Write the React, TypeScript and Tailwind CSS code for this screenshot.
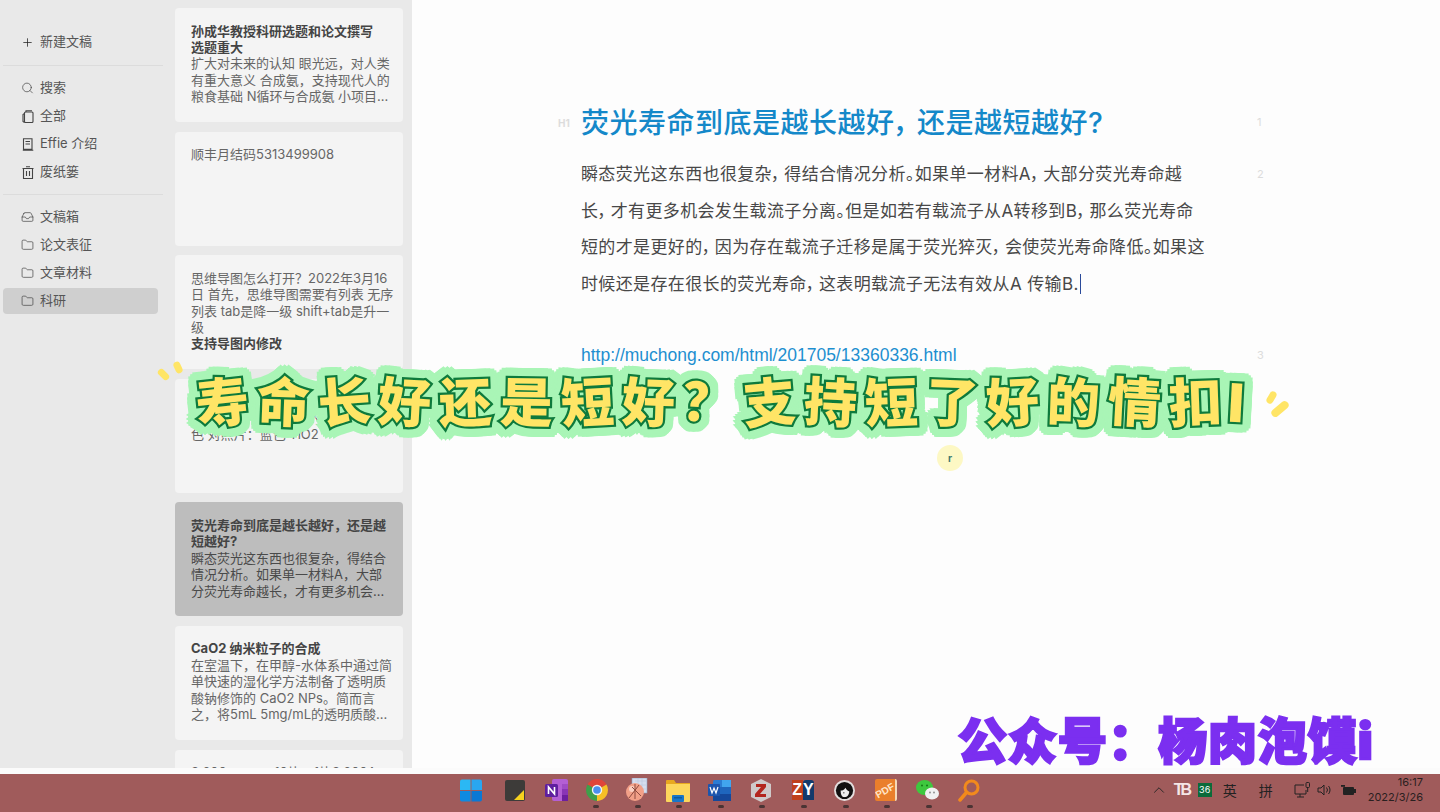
import React from "react";
import { Plus, Search, Inbox, Folder, ChevronUp } from "lucide-react";

const CJK = "font-['Inter','Noto_Sans_CJK_SC',sans-serif]";

type CardT = { lines: { t: string; b?: boolean }[]; active?: boolean };

const cards: CardT[] = [
  { lines: [
    { t: "孙成华教授科研选题和论文撰写", b: true }, { t: "选题重大", b: true },
    { t: "扩大对未来的认知 眼光远，对人类" }, { t: "有重大意义 合成氨，支持现代人的" }, { t: "粮食基础 N循环与合成氨 小项目..." } ] },
  { lines: [{ t: "顺丰月结码5313499908" }] },
  { lines: [
    { t: "思维导图怎么打开？2022年3月16" }, { t: "日 首先，思维导图需要有列表 无序" }, { t: "列表 tab是降一级 shift+tab是升一" }, { t: "级" }, { t: "支持导图内修改", b: true } ] },
  { lines: [{ t: "如何判断材料的光" }, { t: "照射后，产生活性氧的能力" }, { t: "色 对照片：蓝色 TiO2" }] },
  { active: true, lines: [
    { t: "荧光寿命到底是越长越好，还是越", b: true }, { t: "短越好?", b: true },
    { t: "瞬态荧光这东西也很复杂，得结合" }, { t: "情况分析。如果单一材料A，大部" }, { t: "分荧光寿命越长，才有更多机会..." } ] },
  { lines: [
    { t: "CaO2 纳米粒子的合成", b: true }, { t: "在室温下，在甲醇-水体系中通过简" }, { t: "单快速的湿化学方法制备了透明质" }, { t: "酸钠修饰的 CaO2 NPs。简而言" }, { t: "之，将5mL 5mg/mL的透明质酸..." }, { t: "MOFS", b: true } ] },
  { lines: [{ t: "3.600             10片，1片3.600A" }] },
];

function NavItem({ icon, label, active }: { icon: React.ReactNode; label: string; active?: boolean }) {
  return (
    <div className={`mx-[3px] w-[155px] h-[26px] my-px shrink-0 flex items-center rounded-[4px] pl-[18px] gap-[6px] text-[13px] text-[#555] ${active ? "bg-[#cfcfcf]" : ""}`}>
      <span className="w-[13px] h-[14px] flex items-center justify-center">{icon}</span>
      <span>{label}</span>
    </div>
  );
}

function Card({ c }: { c: CardT }) {
  return (
    <div className={`h-[114px] shrink-0 w-[228px] rounded-[4px] pl-4 pt-[14.5px] overflow-hidden text-[13px] leading-[16.4px] whitespace-pre ${c.active ? "bg-[#bdbdbd] text-[#4a4a4a]" : "bg-[#f4f4f4] text-[#666]"}`}>
      <div className="h-[86px] w-[212px] overflow-hidden">
        {c.lines.map((l, i) => (
          <div key={i} className={l.b ? "font-bold text-[#444]" : ""}>{l.t}</div>
        ))}
      </div>
    </div>
  );
}

function Row({ mark, n, children, cls, numPt }: { mark?: string; n: number; children: React.ReactNode; cls: string; numPt: string }) {
  return (
    <div className={`flex ${cls}`}>
      <div className="w-[23px] text-[10px] font-bold text-[#dcdcdc] pt-[13px] leading-[14px] shrink-0">{mark}</div>
      <div className="w-[676px] shrink-0">{children}</div>
      <div className={`text-[11px] text-[#dcdcdc] leading-[14px] ${numPt}`}>{n}</div>
    </div>
  );
}

const Body = ({ children }: { children: React.ReactNode }) => (
  <div className="h-[36.5px] leading-[36.5px] text-[17px] text-[#484848] whitespace-nowrap tracking-[0.36px] [font-feature-settings:'palt']">{children}</div>
);

function Icon({ children }: { children: React.ReactNode }) {
  return <div className="w-[41.5px] h-[24px] flex items-center justify-center shrink-0">{children}</div>;
}

const s = { fill: "none", stroke: "#444", strokeWidth: 1.1 };

const AllIcon = () => (
  <svg width="12" height="13" viewBox="0 0 12 13"><rect x="2.500" y="2" width="8.500" height="10.500" rx="1" {...s} /><path d="M2.500 3.500 1 4.500v7l1.500 1M4 2V.700h6" {...s} /></svg>
);
const DocIcon = () => (
  <svg width="12" height="13" viewBox="0 0 12 13"><path d="M1.500.700h8.500v10.500H1.500zM3.500 3.500h4.500M3.500 6h4.500M.800 12.300h10.500" {...s} /></svg>
);
const TrashIcon = () => (
  <svg width="12" height="13" viewBox="0 0 12 13"><path d="M1.500 2.500h9v10h-9zM.500 2.500h11M4 .700h4M4.500 5v5M7.500 5v5" {...s} /></svg>
);

function Taskbar() {
  return (
    <div className="h-[38px] bg-[#a05b5b] flex items-center relative shrink-0">
      <div className="flex ml-[450px] -mt-[6px]">
        <Icon><svg width="22" height="23" viewBox="0 0 23 23"><path fill="#2bb8f4" d="M0 2a2 2 0 0 1 2-2h9v11H0z"/><path fill="#29a6f0" d="M12 0h9a2 2 0 0 1 2 2v9H12z"/><path fill="#0f8ae0" d="M0 12h11v11H2a2 2 0 0 1-2-2z"/><path fill="#0a78d4" d="M12 12h11v9a2 2 0 0 1-2 2h-9z"/></svg></Icon>
        <Icon><svg width="20" height="21" viewBox="0 0 20 21" className="ml-[5px]"><rect width="20" height="21" rx="2" fill="#3d3b39"/><path fill="#f7d21e" d="M19 10v10H9z"/></svg></Icon>
        <Icon><svg width="23" height="22" viewBox="0 0 23 22" className="ml-[5px]"><rect x="7" y="0" width="16" height="22" rx="2" fill="#b45fd4"/><rect x="17" y="5" width="6" height="5" fill="#a04cc4"/><rect x="17" y="10" width="6" height="6" fill="#8a35b5"/><rect x="17" y="16" width="6" height="6" fill="#6d1f9e"/><rect x="0" y="5" width="13" height="13" rx="1.500" fill="#5f1f9f"/><path d="M3.500 15V8l6 7V8" stroke="#fff" strokeWidth="1.600" fill="none"/></svg></Icon>
        <Icon><svg width="22" height="22" viewBox="0 0 22 22" className="ml-[3px]"><path fill="#e0453a" d="M11 11 1.500 5.500A11 11 0 0 1 20.500 5.500z"/><path fill="#3f9f4a" d="M11 11 1.500 5.500A11 11 0 0 0 11 22z"/><path fill="#f6c026" d="M11 11v11A11 11 0 0 0 20.500 5.500z"/><circle cx="11" cy="11" r="5.200" fill="#f4f4f4"/><circle cx="11" cy="11" r="3.800" fill="#4a8ff0"/></svg></Icon>
        <Icon><svg width="22" height="24" viewBox="0 0 22 24"><rect x="6" y="0" width="15" height="15" fill="#d5ddee" stroke="#8fa0c0" strokeWidth=".6"/><path d="M9 3h11M9 7h11M9 11h11M12 0v15M16 0v15" stroke="#b5c2da" strokeWidth=".5"/><circle cx="9" cy="14" r="9" fill="#f2a088"/><circle cx="6" cy="11" r="3" fill="#fbd0c2"/><path d="M3 20 13 7M6 9l9 9M9 6v15" stroke="#8e4a3e" strokeWidth="1"/></svg></Icon>
        <Icon><svg width="24" height="23" viewBox="0 0 24 23"><path fill="#e8a820" d="M0 2a1 1 0 0 1 1-1h7l2 3h14v5H0z"/><path fill="#fdd65c" d="M0 5h24v17a1 1 0 0 1-1 1H1a1 1 0 0 1-1-1z"/><rect x="6" y="16" width="12" height="7" rx="1" fill="#1976c8"/><rect x="8" y="18" width="8" height="1.500" fill="#0f5aa0"/></svg></Icon>
        <Icon><svg width="23" height="21" viewBox="0 0 23 21"><rect x="5" y="0" width="18" height="21" rx="1.500" fill="#2b7cd3"/><rect x="14" y="0" width="9" height="7" fill="#41a5ee"/><rect x="5" y="14" width="18" height="7" fill="#15489a"/><rect x="5" y="7" width="18" height="7" fill="#1f66bd"/><rect x="0" y="4" width="12" height="12" rx="1" fill="#1d55ad"/><path d="m2 7 2 6 2-5 2 5 2-6" stroke="#fff" strokeWidth="1.200" fill="none"/></svg></Icon>
        <Icon><svg width="20" height="23" viewBox="0 0 20 23"><path fill="#cfc9c9" d="M10 0 20 5v13l-10 5L0 18V5z"/><path fill="#b3261e" d="M5 5h10v3l-6 7h6v3H4v-3l6-7H5z"/></svg></Icon>
        <Icon><div className="w-[22px] h-[20px] flex text-[16px] leading-[20px] font-bold font-['Liberation_Sans',sans-serif] text-white"><span className="bg-[#c0401d] w-[11px] text-center">Z</span><span className="bg-[#123a6b] w-[11px] text-center rounded-t-[3px]">Y</span></div></Icon>
        <Icon><svg width="21" height="21" viewBox="0 0 22 22"><circle cx="11" cy="11" r="11" fill="#e4dede"/><circle cx="11" cy="11" r="9" fill="#111"/><path fill="#eee" d="M7 11c2 0 4-1 5-3 1 2 2 3 4 4 0 3-2 6-5 6s-4-3-4-7z"/><path fill="#111" d="M9.500 13h1.500v1H9.500zM8.500 18h5v2h-5z"/></svg></Icon>
        <Icon><div className="w-[22px] h-[22px] rounded-[2px] bg-[#ea7f2b] border-r-2 border-[#f4d8b8] overflow-hidden flex items-center justify-center"><span className="text-[10px] font-bold text-[#ffe4c8] font-['Liberation_Sans',sans-serif] -rotate-[30deg]">PDF</span></div></Icon>
        <Icon><svg width="23" height="21" viewBox="0 0 23 21"><ellipse cx="8.500" cy="7.500" rx="8.500" ry="7.500" fill="#3ec83e"/><ellipse cx="16" cy="13.500" rx="7" ry="6" fill="#f0f0f0"/><circle cx="6" cy="5.500" r="1" fill="#157a15"/><circle cx="11" cy="5.500" r="1" fill="#157a15"/><circle cx="14" cy="12.500" r=".9" fill="#888"/><circle cx="18" cy="12.500" r=".9" fill="#888"/></svg></Icon>
        <Icon><svg width="22" height="23" viewBox="0 0 22 23"><circle cx="13.500" cy="8.500" r="6.500" fill="none" stroke="#f28a1c" strokeWidth="3"/><path d="M8.500 13.500 2 21" stroke="#f28a1c" strokeWidth="3.500" strokeLinecap="round"/></svg></Icon>
      </div>
      <div className="absolute left-[593px] bottom-[4px] flex gap-[35.600px]">
        {Array.from({ length: 10 }).map((_, i) => (
          <span key={i} className="w-[6px] h-[3px] rounded-full bg-[#4a3434]" />
        ))}
      </div>
      <div className="absolute right-[17px] top-0 h-[32px] flex items-center text-[#222]">
        <ChevronUp size={18} strokeWidth={1.200} className="mr-[6px]" />
        <span className="w-[17px] text-[16px] font-bold tracking-[-3px] text-[#f4e6e6] font-['Liberation_Sans',sans-serif] mr-[7px]">TB</span>
        <span className="w-[14px] h-[14px] bg-[#0b6b3a] text-white text-[9px] leading-[14px] text-center mr-[11px]">36</span>
        <span className="text-[14px] mr-[22px]">英</span>
        <span className="text-[14px] mr-[21px]">拼</span>
        <svg width="17" height="16" viewBox="0 0 17 16" className="mr-[6px]" fill="none" stroke="#222" strokeWidth="1"><path d="M10 3H1v9h11V8M6 12v3M3 15h7"/><rect x="12" y=".5" width="3.500" height="5" rx="1"/><path d="M13.700 5.500V10"/></svg>
        <svg width="15" height="14" viewBox="0 0 15 14" className="mr-[9px]" fill="none" stroke="#222" strokeWidth="1"><path d="M1 5v4h3l3 3V2L4 5zM9.500 4.500a4 4 0 0 1 0 5M11.500 3a6 6 0 0 1 0 8"/></svg>
        <svg width="15" height="11" viewBox="0 0 15 11" className="mr-[12px]"><rect x="2" y="2" width="11" height="8" rx="1" fill="#222"/><rect x="13" y="4" width="2" height="4" fill="#222"/><rect y="0" width="4" height="1.800" fill="#222"/></svg>
        <div className="text-[11px] leading-[15px] text-right text-[#2a2020]"><div>16:17</div><div>2022/3/26</div></div>
      </div>
    </div>
  );
}

const chars = "寿命长好还是短好？支持短了好的情扣l".split("");
const rot = ["-rotate-[6deg]", "rotate-[2deg]", "-rotate-[4deg]", "rotate-[3deg]", "-rotate-[2deg]", "rotate-[1deg]", "-rotate-[3deg]", "rotate-[2deg]", "rotate-[4deg]", "-rotate-[5deg]", "rotate-[3deg]", "-rotate-[2deg]", "rotate-[2deg]", "-rotate-[3deg]", "rotate-[2deg]", "rotate-[3deg]", "-rotate-[2deg]", "rotate-[3deg]"];

export default function App() {
  return (
    <div className={`relative w-[1440px] h-[812px] overflow-hidden flex flex-col bg-white ${CJK}`}>
      <div className="h-[768px] flex shrink-0 overflow-hidden bg-[#e9e9e9]">
        <aside className="w-[165px] shrink-0 pt-[28px] flex flex-col">
          <NavItem icon={<Plus size={15} strokeWidth={1.400} color="#222" />} label="新建文稿" />
          <div className="mx-[3px] w-[160px] h-px bg-[#dcdcdc] mt-[9px] mb-[8px] shrink-0" />
          <NavItem icon={<Search size={14} strokeWidth={1.300} color="#444" />} label="搜索" />
          <NavItem icon={<AllIcon />} label="全部" />
          <NavItem icon={<DocIcon />} label="Effie 介绍" />
          <NavItem icon={<TrashIcon />} label="废纸篓" />
          <div className="mx-[3px] w-[160px] h-px bg-[#dcdcdc] mt-[8px] mb-[8px] shrink-0" />
          <NavItem icon={<Inbox size={14} strokeWidth={1.300} color="#444" />} label="文稿箱" />
          <NavItem icon={<Folder size={14} strokeWidth={1.300} color="#444" />} label="论文表征" />
          <NavItem icon={<Folder size={14} strokeWidth={1.300} color="#444" />} label="文章材料" />
          <NavItem active icon={<Folder size={14} strokeWidth={1.300} color="#444" />} label="科研" />
        </aside>
        <div className="w-[247px] shrink-0 pl-[10px] pt-[8px] flex flex-col gap-[9.600px] overflow-hidden">
          {cards.map((c, i) => <Card key={i} c={c} />)}
        </div>
        <main className="flex-1 bg-[#fdfdfd] pl-[146px] pt-[103px]">
          <Row mark="H1" n={1} numPt="pt-[12px]" cls="h-[42px] mb-[11px]">
            <div className="text-[28px] leading-[40px] tracking-[0.5px] font-medium text-[#1488c9] whitespace-nowrap [font-feature-settings:'palt']">荧光寿命到底是越长越好， 还是越短越好?</div>
          </Row>
          <Row n={2} numPt="pt-[11px]" cls="mb-[35px]">
            <Body>瞬态荧光这东西也很复杂，{"\u2009"}得结合情况分析。如果单一材料A，{"\u2009"}大部分荧光寿命越</Body>
            <Body>长，{"\u2009"}才有更多机会发生载流子分离。但是如若有载流子从A转移到B，{"\u2009"}那么荧光寿命</Body>
            <Body>短的才是更好的，{"\u2009"}因为存在载流子迁移是属于荧光猝灭，{"\u2009"}会使荧光寿命降低。如果这</Body>
            <Body><span className="border-r border-[#2a4a9a] pr-px">时候还是存在很长的荧光寿命，{"\u2009"}这表明载流子无法有效从A 传输B.</span></Body>
          </Row>
          <Row n={3} numPt="pt-[11px]" cls="">
            <div className="text-[17.500px] leading-[36px] text-[#1d8fd0] font-['Liberation_Sans',sans-serif] whitespace-nowrap">http://muchong.com/html/201705/13360336.html</div>
          </Row>
        </main>
      </div>
      <div className="h-[6px] bg-[#fbfbfb] shrink-0" />
      <Taskbar />

      {/* overlays: video captions */}
      <div className="absolute left-[192px] top-[368px] flex items-center text-[53px] leading-[70px] font-black w-[1060px] [filter:drop-shadow(4px_0_0_#a9f5b6)_drop-shadow(-4px_0_0_#a9f5b6)_drop-shadow(0_4px_0_#a9f5b6)_drop-shadow(0_-4px_0_#a9f5b6)_drop-shadow(2px_2px_0_#a9f5b6)_drop-shadow(-2px_-2px_0_#a9f5b6)_drop-shadow(2px_-2px_0_#a9f5b6)_drop-shadow(-2px_2px_0_#a9f5b6)]">
        {chars.map((c, i) => (
          <span key={i} className={`inline-block text-[#ffe566] [-webkit-text-stroke:4.500px_#0e7a3c] [paint-order:stroke_fill] ${i === 17 ? "w-[20px]" : "w-[60.800px]"} text-center ${rot[i]}`}>{c}</span>
        ))}
      </div>
      <span className="absolute left-[157px] top-[371px] w-[13px] h-[7px] rounded-full bg-[#ffe566] rotate-[45deg]" />
      <span className="absolute left-[172px] top-[364px] w-[12px] h-[7px] rounded-full bg-[#ffe566] rotate-[65deg]" />
      <span className="absolute left-[1265px] top-[394px] w-[13px] h-[7px] rounded-full bg-[#ffe566] -rotate-[60deg]" />
      <span className="absolute left-[1270px] top-[405px] w-[20px] h-[8px] rounded-full bg-[#ffe566] -rotate-[40deg]" />
      <div className="absolute left-[937px] top-[445px] w-[26px] h-[26px] rounded-full bg-[#fdf8c4] flex items-center justify-center text-[10px] font-bold text-[#3e7a70]">r</div>
      <div className="absolute left-[958px] top-[707px] text-[49px] leading-[70px] tracking-[1px] font-black text-[#7b2ff0] whitespace-nowrap [-webkit-text-stroke:2.500px_#7b2ff0]">公众号：杨肉泡馍i</div>
    </div>
  );
}
